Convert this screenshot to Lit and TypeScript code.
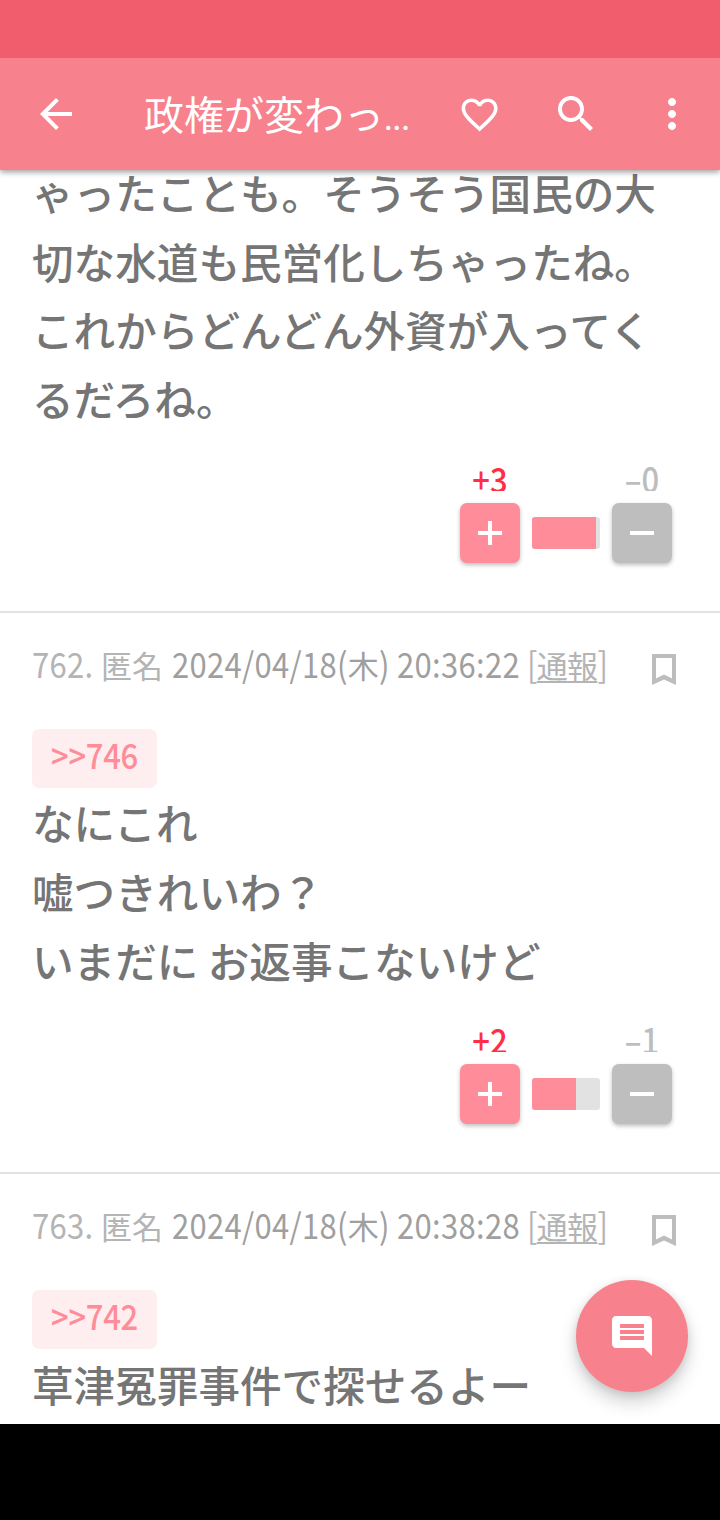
import { LitElement, html, css, svg } from "lit";
import { customElement, property } from "lit/decorators.js";

// Wraps Latin runs so that digits get their tall, condensed look beside kanji.
const mixed = (text: string) =>
  (text.match(/[\x00-\x7f–]+|[^\x00-\x7f–]+/g) ?? []).map((run) =>
    /^[\x00-\x7f–]/.test(run) ? html`<span class="latin">${run}</span>` : run
  );

const latinStyle = css`
  .latin {
    display: inline-block;
    white-space: pre;
    line-height: 1;
    transform: scaleY(1.12);
    transform-origin: 50% 93.6%;
  }
`;

@customElement("icon-glyph")
class IconGlyph extends LitElement {
  @property() path = "";
  @property({ type: Number }) size = 48;
  static styles = css`
    :host { display: block; line-height: 0; }
    svg { display: block; fill: currentColor; }
  `;
  render() {
    return html`<svg width=${this.size} height=${this.size} viewBox="0 0 24 24">${svg`<path d=${this.path}></path>`}</svg>`;
  }
}

const ICONS = {
  back: "M20 11H7.83l5.59-5.59L12 4l-8 8 8 8 1.41-1.41L7.83 13H20v-2z",
  heart: "M16.5 3c-1.74 0-3.41.81-4.5 2.09C10.91 3.81 9.24 3 7.5 3 4.42 3 2 5.42 2 8.5c0 3.78 3.4 6.86 8.55 11.54L12 21.35l1.45-1.32C18.6 15.36 22 12.28 22 8.5 22 5.42 19.58 3 16.5 3zm-4.4 15.55l-.1.1-.1-.1C7.14 14.24 4 11.39 4 8.5 4 6.5 5.5 5 7.5 5c1.54 0 3.04.99 3.57 2.36h1.87C13.46 5.99 14.96 5 16.5 5c2 0 3.5 1.5 3.5 3.5 0 2.89-3.14 5.74-7.9 10.05z",
  search: "M15.5 14h-.79l-.28-.27C15.41 12.59 16 11.11 16 9.5 16 5.91 13.09 3 9.5 3S3 5.91 3 9.5 5.91 16 9.5 16c1.61 0 3.09-.59 4.23-1.57l.27.28v.79l5 4.99L20.49 19l-4.99-5zm-6 0C7.01 14 5 11.99 5 9.5S7.01 5 9.5 5 14 7.01 14 9.5 11.99 14 9.5 14z",
  more: "M12 8c1.1 0 2-.9 2-2s-.9-2-2-2-2 .9-2 2 .9 2 2 2zm0 2c-1.1 0-2 .9-2 2s.9 2 2 2 2-.9 2-2-.9-2-2-2zm0 6c-1.1 0-2 .9-2 2s.9 2 2 2 2-.9 2-2-.9-2-2-2z",
  comment: "M21.99 4c0-1.1-.89-2-1.99-2H4c-1.1 0-2 .9-2 2v12c0 1.1.9 2 2 2h14l4 4-.01-18zM18 14H6v-2h12v2zm0-3H6V9h12v2zm0-3H6V6h12v2z",
  plus: "M11 6h2v5h5v2h-5v5h-2v-5H6v-2h5z",
  minus: "M6 11h12v2H6z",
};

@customElement("vote-box")
class VoteBox extends LitElement {
  @property({ type: Number }) plus = 0;
  @property({ type: Number }) minus = 0;
  @property({ type: Number }) share = 0;
  static styles = [
    latinStyle,
    css`
      :host { display: flex; justify-content: flex-end; padding: 31px 48px 48px 0; }
      .grid {
        display: grid;
        grid-template-columns: 60px 68px 60px;
        grid-template-rows: 28px 60px;
        gap: 12px;
        align-items: center;
      }
      .count {
        height: 28px;
        overflow: hidden;
        text-align: center;
        font-size: 31px;
        line-height: 34px;
        font-weight: 500;
      }
      .count.up { color: #ff2e46; }
      .count.down { color: #bdbdbd; }
      .button {
        display: flex;
        align-items: center;
        justify-content: center;
        width: 60px;
        height: 60px;
        border-radius: 7px;
        color: #fff;
        box-shadow: 0 2px 4px rgba(0, 0, 0, 0.26);
      }
      .button.up { background: #ff8c99; }
      .button.down { background: #bebebe; }
      .bar { height: 32px; border-radius: 3px; overflow: hidden; background: #e2e2e2; }
      .fill { height: 100%; background: #ff8c99; }
    `,
  ];
  render() {
    return html`<div class="grid">
      <div class="count up">${mixed(`+${this.plus}`)}</div>
      <div></div>
      <div class="count down">${mixed(`–${this.minus}`)}</div>
      <div class="button up"><icon-glyph .path=${ICONS.plus}></icon-glyph></div>
      <div class="bar"><div class="fill" style="width:${this.share}px"></div></div>
      <div class="button down"><icon-glyph .path=${ICONS.minus}></icon-glyph></div>
    </div>`;
  }
}

interface Comment {
  id?: number;
  date?: string;
  reply?: string;
  lines: string[];
  votes?: { plus: number; minus: number; share: number };
}

const COMMENTS: Comment[] = [
  {
    lines: ["ゃったことも。そうそう国民の大", "切な水道も民営化しちゃったね。", "これからどんどん外資が入ってく", "るだろね。"],
    votes: { plus: 3, minus: 0, share: 64 },
  },
  {
    id: 762,
    date: "2024/04/18(木) 20:36:22",
    reply: ">>746",
    lines: ["なにこれ", "嘘つきれいわ？", "いまだに お返事こないけど"],
    votes: { plus: 2, minus: 1, share: 44 },
  },
  { id: 763, date: "2024/04/18(木) 20:38:28", reply: ">>742", lines: ["草津冤罪事件で探せるよー"] },
];

@customElement("comment-item")
class CommentItem extends LitElement {
  @property({ attribute: false }) item!: Comment;
  static styles = [
    latinStyle,
    css`
      :host { display: block; border-bottom: 2px solid #e2e2e2; }
      :host(:last-child) { border-bottom: none; }
      .meta {
        display: grid;
        grid-template-columns: 69px 71px 355px 1fr 24px;
        padding: 34px 44px 0 32px;
        height: 72px;
        font-size: 31px;
        line-height: 36px;
        white-space: pre;
        color: #b4b4b4;
      }
      .num { letter-spacing: 0.3px; }
      .date { color: #9f9f9f; letter-spacing: 0.3px; }
      .source { letter-spacing: -0.7px; }
      .report { text-decoration: underline; text-decoration-thickness: 2px; text-underline-offset: 3px; }
      .bookmark { display: block; margin-top: 7px; fill: #bdbdbd; }
      .reply { display: flex; padding: 10px 32px 0; height: 58.7px; }
      .chip {
        box-sizing: border-box;
        width: 125px;
        height: 59px;
        border-radius: 7px;
        background: #ffeef0;
        color: #ff8c99;
        font-size: 31px;
        line-height: 54px;
        font-weight: 500;
        letter-spacing: -0.3px;
        text-align: center;
      }
      .text { padding: 0 32px; font-size: 41.6px; line-height: 70px; font-weight: 500; color: #757575; }
      .line { white-space: pre; height: 68.64px; }
    `,
  ];
  render() {
    const c = this.item;
    return html`
      ${c.id
        ? html`<div class="meta">
            <span class="num">${mixed(`${c.id}.`)}</span><span>匿名</span><span class="date">${mixed(c.date!)}</span><span class="source">${mixed("[")}<span class="report">通報</span>${mixed("]")}</span>
            <svg class="bookmark" width="24" height="31" viewBox="0 0 24 31"><path fill-rule="evenodd" d="M0 0H24V31L12 25.6L0 31ZM4 4V24.6L12 20.4L20 24.6V4Z"/></svg>
          </div>`
        : ""}
      ${c.reply ? html`<div class="reply"><div class="chip">${mixed(c.reply)}</div></div>` : ""}
      <div class="text">${c.lines.map((l) => html`<div class="line">${l}</div>`)}</div>
      ${c.votes
        ? html`<vote-box .plus=${c.votes.plus} .minus=${c.votes.minus} .share=${c.votes.share}></vote-box>`
        : ""}
    `;
  }
}

@customElement("app-root")
class AppRoot extends LitElement {
  static styles = css`
    :host {
      display: flex;
      flex-direction: column;
      position: relative;
      width: 720px;
      height: 1520px;
      overflow: hidden;
      background: #fff;
      font-family: "Noto Sans CJK JP", sans-serif;
    }
    .status { flex: none; height: 58px; background: #f25d6e; z-index: 2; }
    .bar {
      flex: none;
      display: flex;
      align-items: center;
      box-sizing: border-box;
      height: 112px;
      padding: 0 24px 0 32px;
      background: #f7828e;
      color: #fff;
      z-index: 1;
      box-shadow: 0 2px 6px rgba(0, 0, 0, 0.4);
    }
    .title { width: 314px; padding: 2px 0 0 64px; font-size: 40px; line-height: 60px; white-space: nowrap; }
    .dots { font-size: 31px; }
    .actions { display: flex; align-items: center; gap: 48px; }
    .heart { display: flex; justify-content: center; width: 48px; padding-top: 1px; }
    .feed { flex: 1; min-height: 0; overflow: hidden; }
    .list { margin-top: -12.9px; }
    .nav { flex: none; height: 96px; background: #000; }
    .fab {
      position: absolute;
      right: 32px;
      bottom: 128px;
      display: flex;
      align-items: center;
      justify-content: center;
      width: 112px;
      height: 112px;
      border-radius: 50%;
      background: #f7828e;
      color: #fff;
      box-shadow: 0 10px 18px rgba(0, 0, 0, 0.18), 0 2px 8px rgba(0, 0, 0, 0.1);
    }
  `;
  render() {
    return html`
      <div class="status"></div>
      <header class="bar">
        <icon-glyph .path=${ICONS.back}></icon-glyph>
        <div class="title">政権が変わっ<span class="dots">...</span></div>
        <div class="actions">
          <div class="heart"><icon-glyph .path=${ICONS.heart} .size=${43.2}></icon-glyph></div>
          <icon-glyph .path=${ICONS.search}></icon-glyph>
          <icon-glyph .path=${ICONS.more}></icon-glyph>
        </div>
      </header>
      <main class="feed">
        <div class="list">${COMMENTS.map((c) => html`<comment-item .item=${c}></comment-item>`)}</div>
      </main>
      <div class="nav"></div>
      <div class="fab"><icon-glyph .path=${ICONS.comment}></icon-glyph></div>
    `;
  }
}
